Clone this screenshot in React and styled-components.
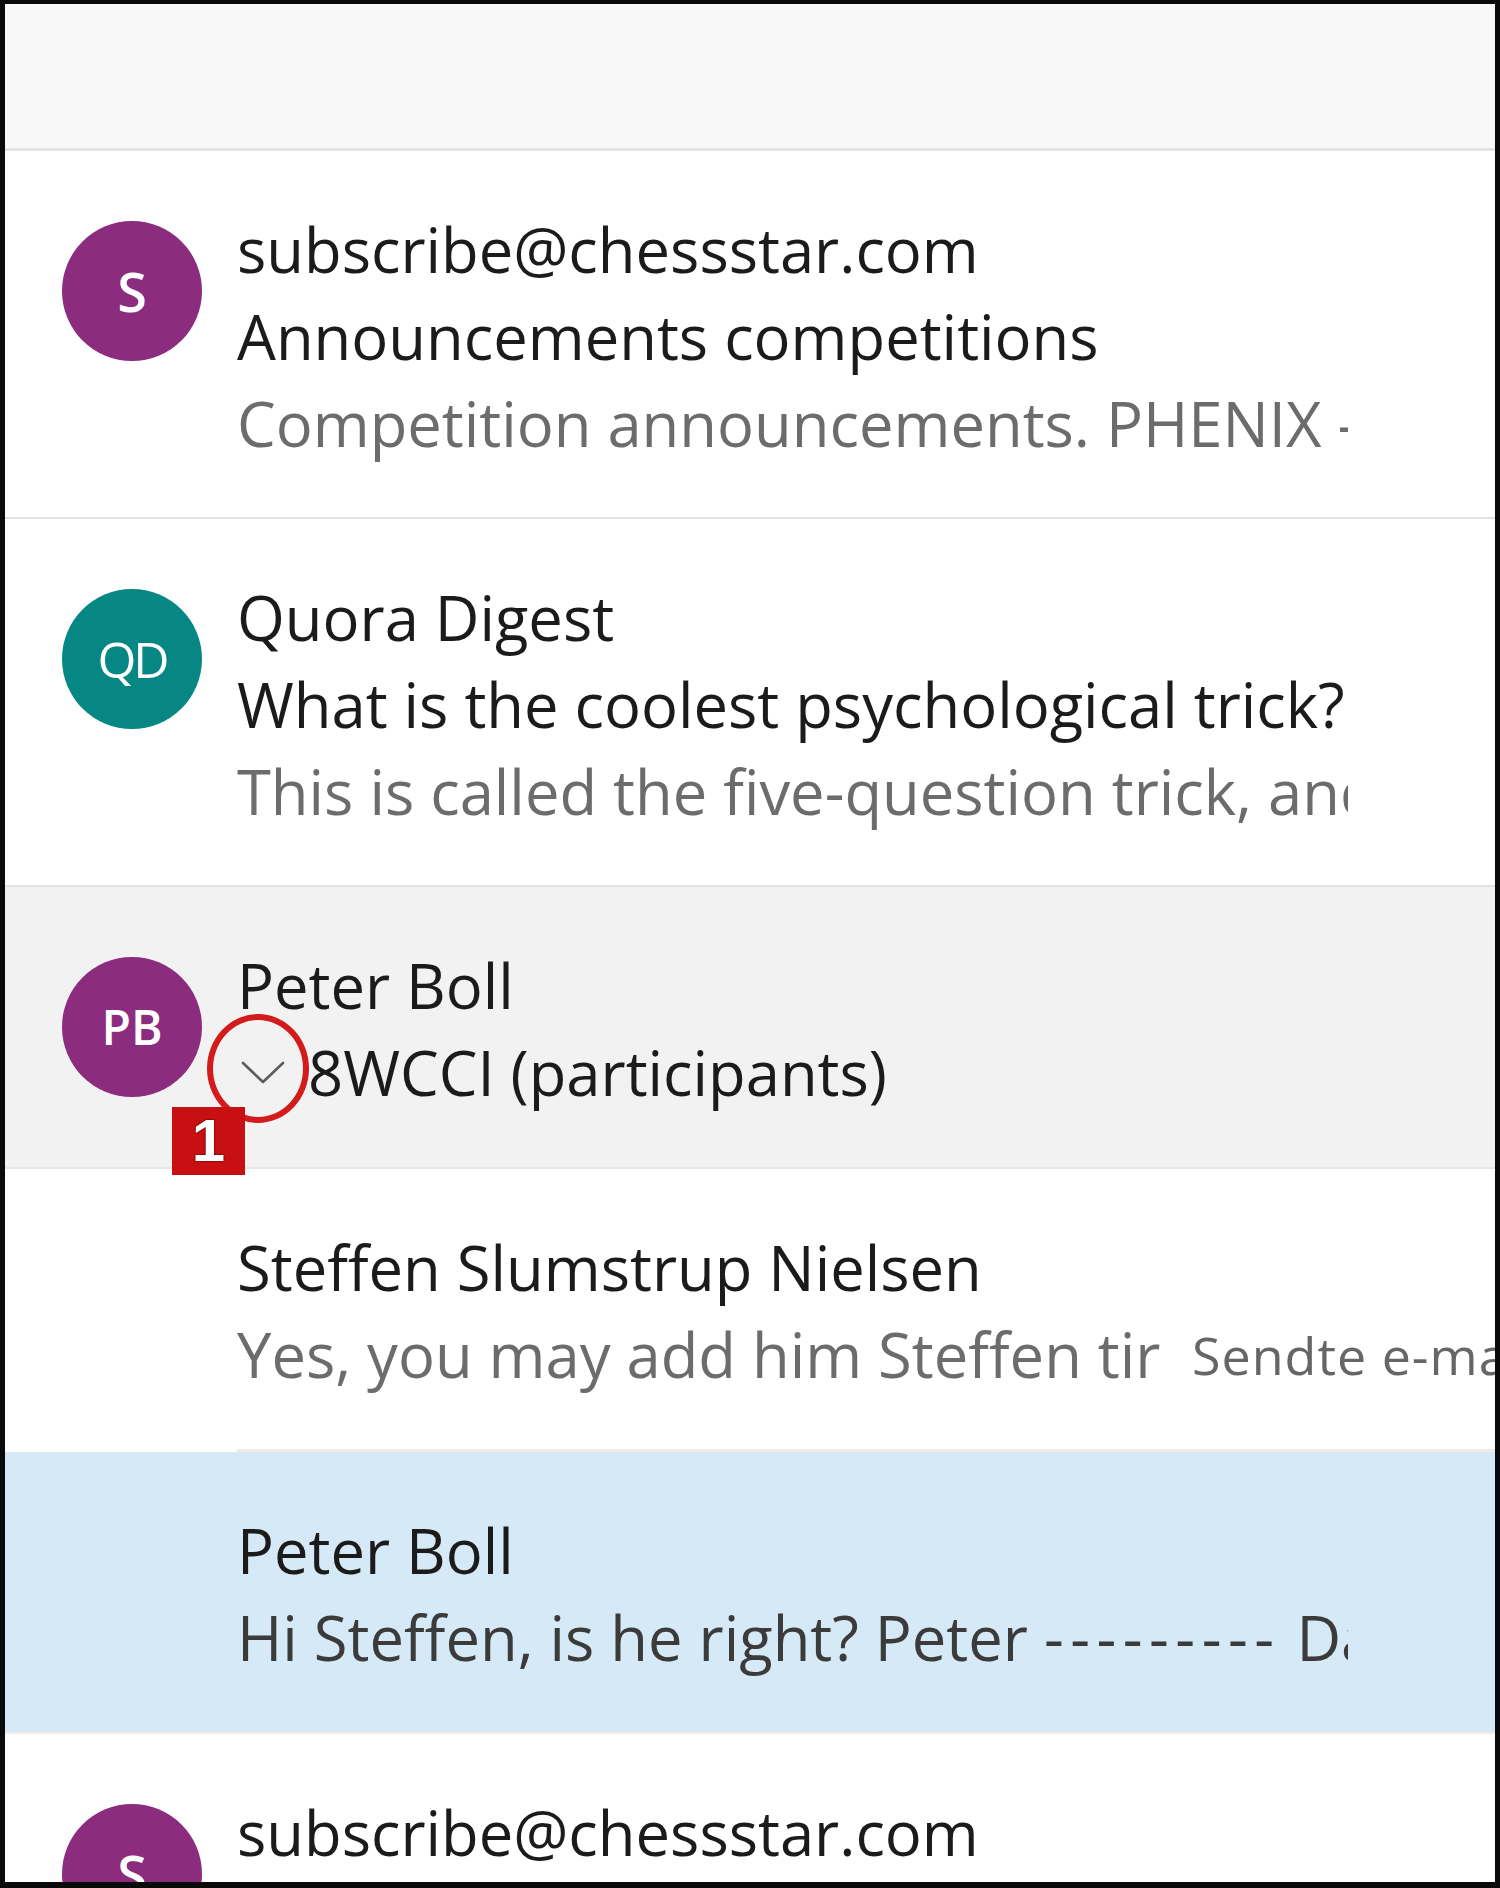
import React from "react";
import styled, { createGlobalStyle } from "styled-components";

const GlobalStyle = createGlobalStyle`
  html, body { margin: 0; padding: 0; background: #ffffff; }
  body { font-family: "Open Sans", "Noto Sans", "Liberation Sans", sans-serif; }
  * { box-sizing: border-box; }
`;

const Frame = styled.div`
  width: 1500px;
  height: 1888px;
  border-style: solid;
  border-color: #0a0a0a;
  border-width: 4px 5px 6px 5px;
  background: #ffffff;
  overflow: hidden;
  display: flex;
  flex-direction: column;
  position: relative;
`;

const Header = styled.div`
  flex: 0 0 auto;
  height: 147px;
  background: #f8f8f8;
  border-bottom: 3px solid #e4e4e4;
  box-shadow: 0 1px 2px rgba(0, 0, 0, 0.04);
`;

const List = styled.div`
  display: flex;
  flex-direction: column;
`;

const Row = styled.div`
  position: relative;
  display: flex;
  align-items: flex-start;
  padding: 55px 0 ${(p) => (p.$lines === 3 ? 50 : 51)}px 57px;
  background: ${(p) => (p.$tone === "gray" ? "#f2f2f2" : "#ffffff")};
  border-bottom: 2px solid ${(p) => (p.$tone === "gray" ? "#e6e6e6" : "#e2e2e2")};
`;

const Avatar = styled.div`
  flex: 0 0 140px;
  width: 140px;
  height: 140px;
  margin-top: 15px;
  margin-right: 35px;
  border-radius: 50%;
  background: ${(p) => p.$color};
  color: #ffffff;
  display: flex;
  align-items: center;
  justify-content: center;
  font-family: "Open Sans", "Noto Sans", sans-serif;
  font-size: ${(p) => p.$size || 50}px;
  font-weight: ${(p) => p.$weight || 600};
  letter-spacing: ${(p) => p.$spacing || 0}px;
  line-height: 1;
`;

const Body = styled.div`
  width: 1111px;
  overflow: hidden;
  display: flex;
  flex-direction: column;
`;

const Line = styled.div`
  height: 87px;
  line-height: 87px;
  font-size: 61.5px;
  white-space: nowrap;
  overflow: hidden;
  color: ${(p) =>
    p.$kind === "preview" ? "#6c6c6c" : p.$kind === "dark" ? "#3b3b3b" : "#1b1b1b"};
  display: flex;
  align-items: center;
`;

const Chevron = styled.span`
  flex: 0 0 71px;
  display: flex;
  align-items: center;
  padding-left: 4px;
  height: 87px;
`;

const ChildRow = styled.div`
  position: relative;
  padding-left: 232px;
  background: ${(p) => (p.$selected ? "#d5eaf6" : "#ffffff")};
  border-bottom: ${(p) => (p.$selected ? "2px solid #f3ece9" : "none")};
`;

const ChildBody = styled.div`
  padding: 55px 0 51px 0;
  border-bottom: ${(p) => (p.$selected ? "none" : "3px solid #f1e9e6")};
  display: flex;
  flex-direction: column;
`;

const PreviewText = styled.span`
  display: inline-block;
  width: ${(p) => p.$width}px;
  overflow: hidden;
  white-space: nowrap;
  flex: 0 0 auto;
`;

const Dashes = styled.span`
  letter-spacing: 6.5px;
`;

const FolderLabel = styled.span`
  margin-left: 31px;
  font-size: 52px;
  letter-spacing: 1px;
  color: #666666;
  white-space: nowrap;
`;

const Ring = styled.div`
  position: absolute;
  left: 202px;
  top: 127px;
  width: 102px;
  height: 109px;
  border: 6px solid #d31b1b;
  border-radius: 50%;
  z-index: 3;
  pointer-events: none;
`;

const Badge = styled.div`
  position: absolute;
  left: 167px;
  top: 220px;
  width: 73px;
  height: 68px;
  background: #c80f12;
  color: #ffffff;
  z-index: 4;
  display: flex;
  align-items: center;
  justify-content: center;
  font-family: "Liberation Sans", Arial, sans-serif;
  font-weight: 700;
  font-size: 60px;
  line-height: 1;
  text-shadow: 0 0 2px #3a0000, 0 0 1px #3a0000;
`;

const Message = ({ avatar, lines }) => (
  <Row $lines={lines.length}>
    <Avatar $color={avatar.color} $size={avatar.size} $weight={avatar.weight} $spacing={avatar.spacing}>
      {avatar.initials}
    </Avatar>
    <Body>
      {lines.map((l, i) => (
        <Line key={i} $kind={l.kind}>
          {l.text}
        </Line>
      ))}
    </Body>
  </Row>
);

export default function App() {
  return (
    <>
      <GlobalStyle />
      <Frame>
        <Header />
        <List>
          <Message
            avatar={{ initials: "S", color: "#8c2c7e", size: 54, weight: 600 }}
            lines={[
              { text: "subscribe@chessstar.com" },
              { text: "Announcements competitions" },
              { text: "Competition announcements. PHENIX - Open", kind: "preview" },
            ]}
          />
          <Message
            avatar={{ initials: "QD", color: "#078784", size: 50, weight: 400, spacing: -3 }}
            lines={[
              { text: "Quora Digest" },
              { text: "What is the coolest psychological trick?" },
              { text: "This is called the five-question trick, and it", kind: "preview" },
            ]}
          />
          <Row $tone="gray" $lines={2}>
            <Avatar $color="#8c2c7e" $size={48} $weight={600}>
              PB
            </Avatar>
            <Body>
              <Line>Peter Boll</Line>
              <Line>
                <Chevron>
                  <svg width="44" height="26" viewBox="0 0 44 26" fill="none">
                    <polyline
                      points="2,3 22,22 42,3"
                      stroke="#5c5c5c"
                      strokeWidth="2.6"
                      strokeLinecap="round"
                      strokeLinejoin="round"
                    />
                  </svg>
                </Chevron>
                8WCCI (participants)
              </Line>
            </Body>
            <Ring />
            <Badge>1</Badge>
          </Row>
          <ChildRow>
            <ChildBody>
              <Line>Steffen Slumstrup Nielsen</Line>
              <Line $kind="preview">
                <PreviewText $width={924}>Yes, you may add him Steffen tirsdag</PreviewText>
                <FolderLabel>Sendte e-mail</FolderLabel>
              </Line>
            </ChildBody>
          </ChildRow>
          <ChildRow $selected>
            <ChildBody $selected>
              <Line>Peter Boll</Line>
              <Line $kind="dark">
                <PreviewText $width={1111}>
                  Hi Steffen, is he right? Peter <Dashes>---------</Dashes> Dato
                </PreviewText>
              </Line>
            </ChildBody>
          </ChildRow>
          <Message
            avatar={{ initials: "S", color: "#8c2c7e", size: 54, weight: 600 }}
            lines={[
              { text: "subscribe@chessstar.com" },
              { text: "Announcements competitions" },
              { text: "Competition announcements.", kind: "preview" },
            ]}
          />
        </List>
      </Frame>
    </>
  );
}
